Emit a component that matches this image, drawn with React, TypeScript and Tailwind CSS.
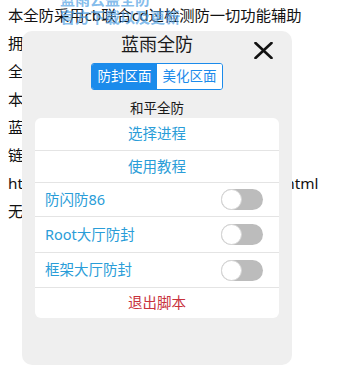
const lines = [
  "本全防采用cb联合cd过检测防一切功能辅助",
  "拥有多重防护，稳定不封号",
  "全程免费使用，请勿倒卖",
  "本脚本仅供学习交流使用",
  "蓝雨全防官方发布",
  "链接：",
  "https://lanyu.cc/download/lanyu-qf/Bt.html",
  "无需root即可使用",
];

type Row = {
  label: string;
  kind: "button" | "toggle" | "danger";
  h: string;
};

const rows: Row[] = [
  { label: "选择进程", kind: "button", h: "h-[32px]" },
  { label: "使用教程", kind: "button", h: "h-[32px]" },
  { label: "防闪防86", kind: "toggle", h: "h-[34px]" },
  { label: "Root大厅防封", kind: "toggle", h: "h-[36px]" },
  { label: "框架大厅防封", kind: "toggle", h: "h-[35px]" },
  { label: "退出脚本", kind: "danger", h: "h-[31px]" },
];

function Toggle() {
  return (
    <div className="flex h-[21px] w-[42px] items-center rounded-full bg-[#bcbcbc]">
      <div className="h-[21px] w-[21px] rounded-full border border-[#d6d6d6] bg-white" />
    </div>
  );
}

export default function App() {
  return (
    <div
      className="relative h-[370px] w-[356px] overflow-hidden bg-white"
      style={{ fontFamily: '"Noto Sans", "Noto Sans CJK SC", sans-serif' }}
    >
      {/* 背景文字 */}
      <div className="pl-[8px] pt-[1px] text-[15.3px] leading-[28px] text-[#111]">
        {lines.map((l) => (
          <div key={l} className="whitespace-nowrap">
            {l}
          </div>
        ))}
      </div>

      {/* 顶部浮动的蓝色提示 */}
      <div className="absolute left-[60px] top-[-10px] text-[15px] font-bold leading-[18px] text-[#4f9fe3]/70">
        <div>蓝雨云盖全防</div>
        <div>官方下载以及更新</div>
      </div>

      {/* 弹窗 */}
      <div className="absolute left-[22px] top-[31px] h-[334px] w-[270px] rounded-[10px] bg-[#efefef]">
        <div className="h-[26px] text-center text-[18px] leading-[26px] text-[#1a1a1a]">
          蓝雨全防
        </div>
        <svg
          className="absolute left-[232px] top-[11px]"
          width="19"
          height="17"
          viewBox="0 0 19 17"
        >
          <path
            d="M1.5 1 L17.5 16 M17.5 1 L1.5 16"
            stroke="#111"
            strokeWidth="2.6"
            strokeLinecap="round"
          />
        </svg>

        <div className="mx-auto mt-[6px] flex h-[27px] w-[132px] overflow-hidden rounded-[3px] border border-[#1b8beb] text-[13.5px] leading-[25px]">
          <div className="flex-1 bg-[#1b8beb] text-center text-white">防封区面</div>
          <div className="flex-1 bg-white text-center text-[#1b8beb]">美化区面</div>
        </div>

        <div className="mt-[9px] h-[18px] text-center text-[13.5px] leading-[18px] text-[#1a1a1a]">
          和平全防
        </div>

        <div className="mx-[13px] mt-[1px] overflow-hidden rounded-[6px] bg-white">
          {rows.map((r, i) => (
            <div
              key={r.label}
              className={`${r.h} flex items-center ${
                i > 0 ? "border-t border-[#e4e4e4]" : ""
              } ${r.kind === "toggle" ? "justify-between pl-[10px] pr-[16px]" : "justify-center"}`}
            >
              <span
                className={`text-[14.5px] ${
                  r.kind === "danger" ? "text-[#c8323c]" : "text-[#2a9dd8]"
                }`}
              >
                {r.label}
              </span>
              {r.kind === "toggle" && <Toggle />}
            </div>
          ))}
        </div>
      </div>
    </div>
  );
}
